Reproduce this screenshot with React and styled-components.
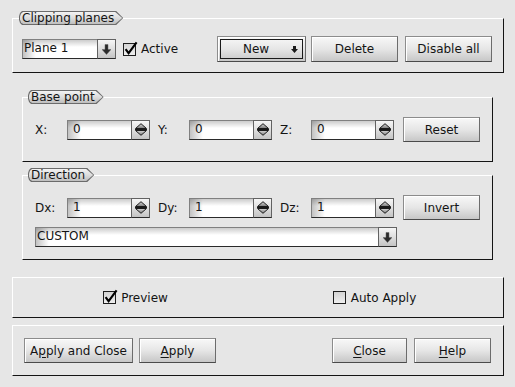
import React from 'react';
import styled, { createGlobalStyle } from 'styled-components';

const GlobalStyle = createGlobalStyle`
  html, body { margin: 0; padding: 0; background: #e6e6e6; }
  body { font-family: "DejaVu Sans", "Liberation Sans", sans-serif; font-size: 12px; color: #141414; }
  *, *::before, *::after { box-sizing: border-box; }
`;

const Page = styled.div`
  width: 515px;
  height: 387px;
  overflow: hidden;
  display: flex;
  flex-direction: column;
  background: #e6e6e6;
`;

const Group = styled.section`
  position: relative;
  margin: ${p => p.$mt}px ${p => p.$mr}px 0 ${p => p.$ml}px;
  padding: ${p => p.$pad || '0'};
  border-style: solid;
  border-width: 1px;
  border-color: #fff #141414 #141414 #fff;
  display: flex;
  flex-direction: column;
  gap: 7px;
`;

const Tab = styled.div`
  position: absolute;
  top: -8px;
  left: ${p => p.$left}px;
  height: 14px;
  line-height: 14px;
  padding: 0 9px 0 3px;
  white-space: nowrap;
  isolation: isolate;
  &::before, &::after {
    content: "";
    position: absolute;
    z-index: -1;
    clip-path: polygon(3px 0, calc(100% - 7px) 0, 100% 50%, calc(100% - 7px) 100%, 3px 100%, 1px 85%, 0 62%, 0 38%, 1px 15%);
  }
  &::before { inset: 0; background: #6b6b6b; }
  &::after { inset: 1px; background: linear-gradient(#f3f3f3, #dadada 55%, #bebebe); }
`;

const Row = styled.div`
  display: flex;
  align-items: center;
  height: ${p => p.$h}px;
`;

const Spacer = styled.div`
  flex: 1;
`;

const FieldLabel = styled.span`
  flex: none;
  width: ${p => p.$w}px;
  margin-left: ${p => p.$ml || 0}px;
  white-space: nowrap;
`;

const Button = styled.button`
  flex: none;
  width: ${p => p.$w}px;
  height: ${p => p.$h || 25}px;
  margin-left: ${p => p.$ml || 0}px;
  padding: 0;
  font: inherit;
  color: #141414;
  border: 1px solid #8c8c8c;
  border-right-color: #6c6c6c;
  border-bottom-color: #4a4a4a;
  background: linear-gradient(#f8f8f8, #e6e6e6 50%, #c7c7c7);
  box-shadow: inset 1px 1px 0 #fff;
  cursor: default;
`;

const MenuButton = styled(Button)`
  padding: 2px;
`;

const MenuInner = styled.div`
  height: 100%;
  border: 1px solid #1a1a1a;
  display: grid;
  grid-template-columns: 1fr auto;
  align-items: center;
  padding-right: 4px;
`;

const MenuText = styled.span`
  text-align: center;
`;

const Mn = styled.span`
  text-decoration: underline;
  text-underline-offset: 2px;
`;

const Combo = styled.div`
  flex: none;
  display: flex;
  width: ${p => p.$w}px;
  height: 20px;
  margin-left: ${p => p.$ml || 0}px;
`;

const Field = styled.div`
  flex: 1;
  min-width: 0;
  border-top: 1px solid #808080;
  border-left: 1px solid #808080;
  border-bottom: 1px solid #2a2a2a;
  background:
    linear-gradient(to bottom, rgba(0,0,0,0.2), rgba(0,0,0,0) 7px),
    linear-gradient(to right, rgba(0,0,0,0.24), rgba(0,0,0,0) 13px),
    #fff;
  padding-left: ${p => p.$pl}px;
  line-height: 17px;
  white-space: nowrap;
  overflow: hidden;
`;

const ArrowBox = styled.div`
  flex: none;
  width: 19px;
  border: 1px solid #626262;
  border-bottom-color: #2a2a2a;
  background: linear-gradient(#f6f6f6, #dedede 50%, #c4c4c4);
  display: flex;
  align-items: center;
  justify-content: center;
`;

const CheckWrap = styled.label`
  display: inline-flex;
  align-items: center;
  gap: 3px;
  margin-left: ${p => p.$ml || 0}px;
  white-space: nowrap;
`;

const PreviewGrid = styled.div`
  display: grid;
  grid-template-columns: 1fr 1fr;
  align-items: center;
  height: 39px;
`;

const Cell = styled.div`
  display: flex;
  justify-content: center;
  padding-right: ${p => p.$pr || 0}px;
`;

const DownArrow = ({ small }) =>
  small ? (
    <svg width="7" height="7" viewBox="0 0 7 7">
      <path d="M2 0h3v3h2L3.5 7 0 3h2z" fill="#1a1a1a" />
    </svg>
  ) : (
    <svg width="9" height="11" viewBox="0 0 9 11">
      <path d="M3 0.5h3v5h3l-4.5 5L0 5.5h3z" fill="#2a2a2a" stroke="#666" strokeWidth="0.5" />
    </svg>
  );

const SpinArrows = () => (
  <svg width="12" height="13" viewBox="0 0 12 13">
    <defs>
      <linearGradient id="sg" x1="0" y1="0" x2="0" y2="1">
        <stop offset="0" stopColor="#d8d8d8" />
        <stop offset="1" stopColor="#7a7a7a" />
      </linearGradient>
    </defs>
    <path d="M0.5 5.5L6 0.7l5.5 4.8z" fill="url(#sg)" stroke="#1a1a1a" strokeWidth="1" strokeLinejoin="round" />
    <path d="M0 6.5h12" stroke="#1a1a1a" strokeWidth="1" />
    <path d="M0.5 7.5h11L6 12.3z" fill="url(#sg)" stroke="#1a1a1a" strokeWidth="1" strokeLinejoin="round" />
  </svg>
);

const CheckBox = ({ checked }) => (
  <svg width="15" height="15" viewBox="0 0 15 15" style={{ overflow: 'visible' }}>
    <defs>
      <linearGradient id="cb" x1="0" y1="0" x2="0" y2="1">
        <stop offset="0" stopColor="#d2d2d2" />
        <stop offset="1" stopColor="#f0f0f0" />
      </linearGradient>
    </defs>
    <rect x="0.5" y="1.5" width="12" height="12" fill="url(#cb)" stroke="#1e1e1e" />
    {checked && (
      <path d="M2.6 7.2L5.6 11.2L13.6 0.4" fill="none" stroke="#000" strokeWidth="2.1" />
    )}
  </svg>
);

const Check = ({ checked, label, ml }) => (
  <CheckWrap $ml={ml}>
    <CheckBox checked={checked} />
    <span>{label}</span>
  </CheckWrap>
);

const Spin = ({ value, w = 83 }) => (
  <Combo $w={w}>
    <Field $pl={5}>{value}</Field>
    <ArrowBox><SpinArrows /></ArrowBox>
  </Combo>
);

const ComboBox = ({ value, w, ml, pl = 1 }) => (
  <Combo $w={w} $ml={ml}>
    <Field $pl={pl}>{value}</Field>
    <ArrowBox><DownArrow /></ArrowBox>
  </Combo>
);

export default function App() {
  return (
    <Page>
      <GlobalStyle />
      <Group $mt={18} $ml={12} $mr={11} $pad="17px 11px 10px 9px">
        <Tab $left={6}>Clipping planes</Tab>
        <Row $h={26}>
          <ComboBox value="Plane 1" w={94} pl={1} />
          <Check checked label="Active" ml={7} />
          <Spacer />
          <MenuButton $w={89} $h={26}>
            <MenuInner>
              <MenuText>New</MenuText>
              <DownArrow small />
            </MenuInner>
          </MenuButton>
          <Button $w={87} $h={26} $ml={5}>Delete</Button>
          <Button $w={87} $h={26} $ml={7}>Disable all</Button>
        </Row>
      </Group>

      <Group $mt={24} $ml={22} $mr={22} $pad="19px 12px 19px 12px">
        <Tab $left={5}>Base point</Tab>
        <Row $h={25}>
          <FieldLabel $w={32}>X:</FieldLabel>
          <Spin value="0" />
          <FieldLabel $w={31} $ml={8}>Y:</FieldLabel>
          <Spin value="0" />
          <FieldLabel $w={31} $ml={8}>Z:</FieldLabel>
          <Spin value="0" />
          <Button $w={77} $ml={9}>Reset</Button>
        </Row>
      </Group>

      <Group $mt={13} $ml={22} $mr={22} $pad="19px 12px 12px 12px">
        <Tab $left={5}>Direction</Tab>
        <Row $h={25}>
          <FieldLabel $w={32}>Dx:</FieldLabel>
          <Spin value="1" />
          <FieldLabel $w={31} $ml={8}>Dy:</FieldLabel>
          <Spin value="1" />
          <FieldLabel $w={31} $ml={8}>Dz:</FieldLabel>
          <Spin value="1" />
          <Button $w={77} $ml={9}>Invert</Button>
        </Row>
        <Row $h={20}>
          <ComboBox value="CUSTOM" w={362} pl={1} />
        </Row>
      </Group>

      <Group $mt={17} $ml={12} $mr={11}>
        <PreviewGrid>
          <Cell><Check checked label="Preview" /></Cell>
          <Cell $pr={12}><Check label="Auto Apply" /></Cell>
        </PreviewGrid>
      </Group>

      <Group $mt={7} $ml={12} $mr={11} $pad="12px 12px 12px 11px">
        <Row $h={25}>
          <Button $w={109}>A<Mn>p</Mn>ply and Close</Button>
          <Button $w={77} $ml={6}><Mn>A</Mn>pply</Button>
          <Spacer />
          <Button $w={75}><Mn>C</Mn>lose</Button>
          <Button $w={77} $ml={7}><Mn>H</Mn>elp</Button>
        </Row>
      </Group>
    </Page>
  );
}
